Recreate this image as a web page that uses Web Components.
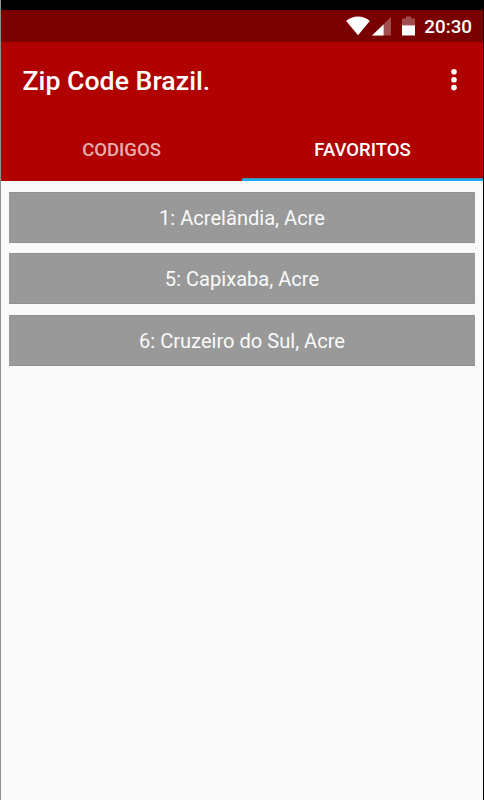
<!DOCTYPE html>
<html lang="pt-BR">
<head>
<meta charset="utf-8">
<title>Zip Code Brazil.</title>
<style>
  html, body {
    height: 100%;
    margin: 0;
  }
  body {
    font-family: Roboto, "Liberation Sans", sans-serif;
  }
</style>
</head>
<body>
<phone-screen>
  <status-bar time="20:30"></status-bar>
  <app-bar>Zip Code Brazil.</app-bar>
  <tab-bar>
    <tab-item>CODIGOS</tab-item>
    <tab-item active>FAVORITOS</tab-item>
  </tab-bar>
  <favorite-list>
    <favorite-item>1: Acrelândia, Acre</favorite-item>
    <favorite-item>5: Capixaba, Acre</favorite-item>
    <favorite-item>6: Cruzeiro do Sul, Acre</favorite-item>
  </favorite-list>
</phone-screen>

<script>
class PhoneScreen extends HTMLElement {
  connectedCallback() {
    this.attachShadow({ mode: 'open' });
    this.shadowRoot.innerHTML = `
      <style>
        :host {
          display: flex;
          flex-direction: column;
          box-sizing: border-box;
          height: 100%;
          overflow: hidden;
          background: #fafafa;
          border-left: 1px solid #8e9192;
          border-right: 1px solid #000;
        }
      </style>
      <slot></slot>
    `;
  }
}

class StatusBar extends HTMLElement {
  connectedCallback() {
    this.attachShadow({ mode: 'open' });
    this.shadowRoot.innerHTML = `
      <style>
        :host {
          display: flex;
          align-items: center;
          justify-content: flex-end;
          box-sizing: border-box;
          height: 42px;
          padding-right: 11px;
          border-top: 10px solid #000;
          background: #7a0000;
          color: #fff;
        }
        svg {
          display: block;
          fill: #fff;
        }
        .signal {
          margin-left: 2px;
        }
        .battery {
          margin-left: 11px;
        }
        .time {
          margin-left: 9.500px;
          padding-top: 2px;
          font-size: 18.800px;
          font-weight: 500;
          line-height: 30px;
        }
      </style>
      <svg class="wifi" width="24" height="20" viewBox="0 0 24 20">
        <path d="M12 19.3L.2 4.9C3.5 2.2 7.5.6 12 .6s8.500 1.600 11.800 4.300z"/>
      </svg>
      <svg class="signal" width="19" height="20" viewBox="0 0 19 20">
        <path d="M19 1v18.500H0z" fill-opacity=".3"/>
        <path d="M11.600 8.500v11H0z"/>
      </svg>
      <svg class="battery" width="13" height="20" viewBox="0 0 13 20">
        <path d="M4 .5h5v2h4v6.800H0V2.500h4z" fill-opacity=".3"/>
        <path d="M0 9.300h13v10.200H0z"/>
      </svg>
      <span class="time">${this.getAttribute('time')}</span>
    `;
  }
}

class AppBar extends HTMLElement {
  connectedCallback() {
    this.attachShadow({ mode: 'open' });
    this.shadowRoot.innerHTML = `
      <style>
        :host {
          display: flex;
          align-items: center;
          justify-content: space-between;
          box-sizing: border-box;
          height: 76px;
          padding: 0 26.500px 0 21.500px;
          background: #b00000;
          color: #fff;
        }
        .title {
          padding-top: 2px;
          font-size: 26.700px;
          font-weight: 500;
          line-height: 74px;
        }
        svg {
          display: block;
          fill: #fff;
        }
      </style>
      <span class="title"><slot></slot></span>
      <svg width="6" height="22" viewBox="0 0 6 22">
        <circle cx="3" cy="2.800" r="2.800"/>
        <circle cx="3" cy="10.700" r="2.800"/>
        <circle cx="3" cy="18.600" r="2.800"/>
      </svg>
    `;
  }
}

class TabBar extends HTMLElement {
  connectedCallback() {
    this.attachShadow({ mode: 'open' });
    this.shadowRoot.innerHTML = `
      <style>
        :host {
          display: grid;
          grid-template-columns: 1fr 1fr;
          height: 63px;
          background: #b00000;
        }
      </style>
      <slot></slot>
    `;
  }
}

class TabItem extends HTMLElement {
  connectedCallback() {
    this.attachShadow({ mode: 'open' });
    this.shadowRoot.innerHTML = `
      <style>
        :host {
          box-sizing: border-box;
          display: block;
          text-align: center;
          font-size: 18.500px;
          font-weight: 500;
          line-height: 65px;
          height: 63px;
          color: rgba(255, 255, 255, 0.7);
        }
        :host([active]) {
          color: #fff;
          background: linear-gradient(#4a8fae 1px, #16aee8 1px) bottom / 100% 3px no-repeat;
        }
      </style>
      <slot></slot>
    `;
  }
}

class FavoriteList extends HTMLElement {
  connectedCallback() {
    this.attachShadow({ mode: 'open' });
    this.shadowRoot.innerHTML = `
      <style>
        :host {
          display: flex;
          flex-direction: column;
          gap: 10.400px;
          padding: 11px 8px;
        }
      </style>
      <slot></slot>
    `;
  }
}

class FavoriteItem extends HTMLElement {
  connectedCallback() {
    this.attachShadow({ mode: 'open' });
    this.shadowRoot.innerHTML = `
      <style>
        :host {
          display: block;
          box-sizing: border-box;
          height: 51px;
          border: solid #909090;
          border-width: 1px 0;
          background: #999;
          color: #fafafa;
          font-size: 20.100px;
          line-height: 50px;
          text-align: center;
        }
      </style>
      <slot></slot>
    `;
  }
}

customElements.define('phone-screen', PhoneScreen);
customElements.define('status-bar', StatusBar);
customElements.define('app-bar', AppBar);
customElements.define('tab-bar', TabBar);
customElements.define('tab-item', TabItem);
customElements.define('favorite-list', FavoriteList);
customElements.define('favorite-item', FavoriteItem);
</script>
</body>
</html>
